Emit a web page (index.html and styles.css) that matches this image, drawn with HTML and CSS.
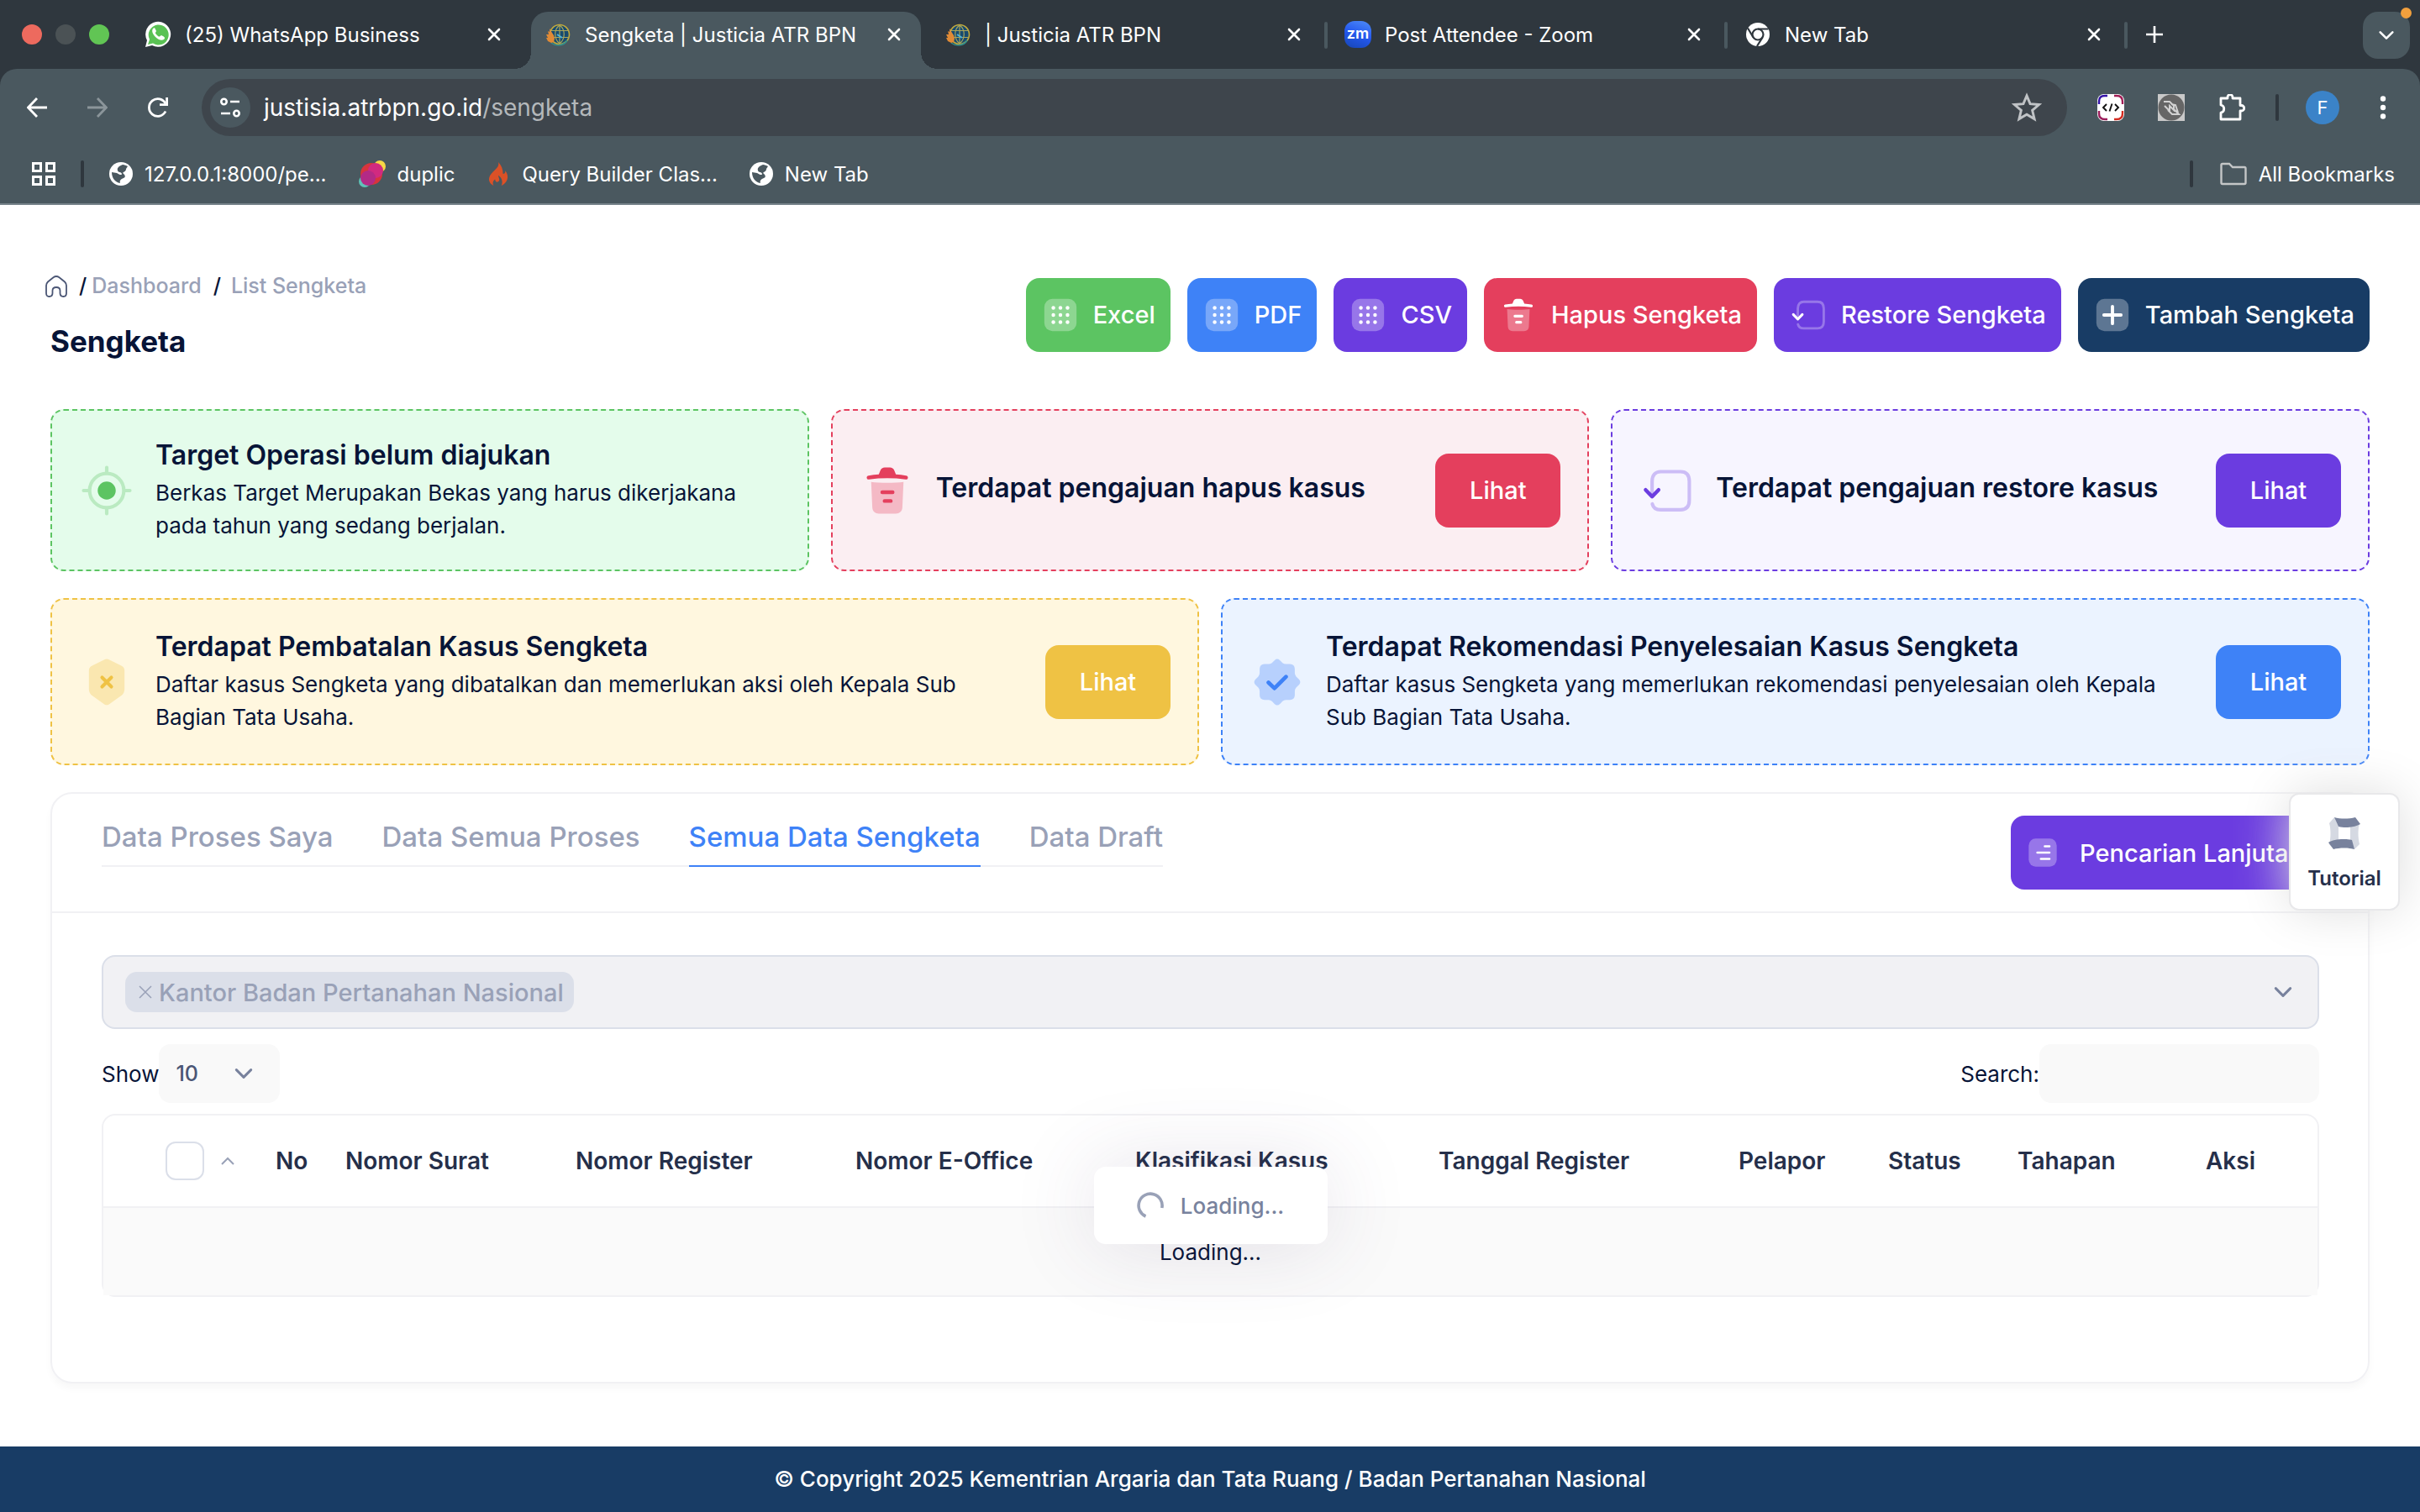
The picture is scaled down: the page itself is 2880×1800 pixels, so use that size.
FILE: index.html
```html
<!DOCTYPE html>
<html lang="id">
<head>
	<meta charset="utf-8">
	<title>Sengketa | Justicia ATR BPN</title>
	<link rel="stylesheet" href="styles.css">
</head>
<body>
	<!-- shared icons -->
	<svg class="sprite" aria-hidden="true">
		<symbol id="i-close" viewBox="0 0 16 16"><path d="M2 2L14 14M14 2L2 14" fill="none" stroke="currentColor" stroke-width="2.6" stroke-linecap="round"/></symbol>
		<symbol id="i-chevron" viewBox="0 0 24 24"><path d="M4 8L12 16L20 8" fill="none" stroke="currentColor" stroke-width="2.8" stroke-linecap="round" stroke-linejoin="round"/></symbol>
		<symbol id="i-grid" viewBox="0 0 24 24">
			<rect x="2" y="2" width="20" height="20" rx="5" fill="currentColor" opacity=".3"/>
			<g fill="currentColor">
				<circle cx="7.6" cy="7.6" r="1.15"/><circle cx="12" cy="7.6" r="1.15"/><circle cx="16.4" cy="7.6" r="1.15"/>
				<circle cx="7.6" cy="12" r="1.15"/><circle cx="12" cy="12" r="1.15"/><circle cx="16.4" cy="12" r="1.15"/>
				<circle cx="7.6" cy="16.4" r="1.15"/><circle cx="12" cy="16.4" r="1.15"/><circle cx="16.4" cy="16.4" r="1.15"/>
			</g>
		</symbol>
		<symbol id="i-trash" viewBox="0 0 24 24">
			<path opacity=".3" fill="currentColor" d="M5 8.3C8.500 8.800 15.500 8.800 19 8.300L18.500 19.300C18.400 21 17.300 22 15.600 22H8.400C6.700 22 5.600 21 5.500 19.300Z"/>
			<path fill="currentColor" d="M8.300 5L9 3.300C9.300 2.500 10 2 10.900 2H13.100C14 2 14.700 2.500 15 3.300L15.700 5C17.200 5.100 18.700 5.300 20.100 5.500C20.700 5.600 21 6 20.900 6.500C20.800 7 20.400 7.300 19.900 7.200C14.700 6.500 9.300 6.500 4.100 7.200C3.600 7.300 3.200 7 3.100 6.500C3 6 3.300 5.600 3.900 5.500C5.300 5.300 6.800 5.100 8.300 5Z"/>
			<path d="M9.800 12.700H14.300M10.800 16.500H13.500" stroke="currentColor" stroke-width="1.600" stroke-linecap="round"/>
		</symbol>
		<symbol id="i-restore" viewBox="0 0 24 24">
			<path opacity=".3" fill="none" stroke="currentColor" stroke-width="1.500" stroke-linecap="round" d="M5.500 14V8C5.500 5.200 7 3.800 9.200 3.800H17.800C20.200 3.800 21.600 5.200 21.600 8V16.200C21.600 18.900 20.200 20.300 17.800 20.300H9.200C7.300 20.300 6 19.500 5.600 17.800"/>
			<path fill="none" stroke="currentColor" stroke-width="1.600" stroke-linecap="round" stroke-linejoin="round" d="M2.700 11.700L5.500 14.600L8.300 11.700"/>
		</symbol>
		<symbol id="i-atr" viewBox="0 0 32 32">
			<circle cx="18" cy="16" r="11.500" fill="#174a70" stroke="#c2a93c" stroke-width="1.600"/>
			<path d="M18 5V27M7 11.500H29M7 19.500H29M18 5C11 10 11 21 18 27M18 5C25 10 25 21 18 27" fill="none" stroke="#a9a55a" stroke-width="1.200"/>
			<path d="M8 26C13 30 23 30 27 23" fill="none" stroke="#2f8e8e" stroke-width="1.600"/>
			<path d="M6 9L9 14L11 17L12 21L11 25L8 26L4 24L2 20L4 20L2 16L5 16L4 12L6 13Z" fill="#e08a36"/>
			<path d="M15 16L21 20" stroke="#4fb3d8" stroke-width="2"/>
		</symbol>
		<symbol id="i-globe" viewBox="0 0 28 28">
			<circle cx="14" cy="14" r="14" fill="#fff"/>
			<path fill="#4a585f" d="M16 3C11 5 9 7 10 10C11 13 14 11 15 14C15 16 12 15 9 13L3 12C3 19 7 24 13 25C12 22 14 20 17 19C20 18 19 15 16 13C18 11 20 11 20 8L22 5C20 4 18 3 16 3Z"/>
		</symbol>
	</svg>

	<!-- browser window -->
	<header class="browser">
		<div class="tab-strip">
			<div class="lights"><span class="light red"></span><span class="light grey"></span><span class="light green"></span></div>
			<div class="tab">
				<svg class="tab-icon" viewBox="0 0 32 32"><path d="M1 31L3 23A15 15 0 1 1 9 29Z" fill="#fff"/><path d="M4 28L6 22A12 12 0 1 1 10 26.500Z" fill="#5ac254"/><path d="M10 9C8 12 10 16 13 19C16 22 20 24 23 22C25 20 24 19 20 17C18 18 18 20 15 17C12 14 13 14 14 12L12 8Z" fill="#fff"/></svg>
				<span class="tab-title">(25) WhatsApp Business</span>
				<button class="tab-close" aria-label="Close tab"><svg><use href="#i-close"/></svg></button>
			</div>
			<div class="tab active">
				<svg class="tab-icon"><use href="#i-atr"/></svg>
				<span class="tab-title">Sengketa | Justicia ATR BPN</span>
				<button class="tab-close" aria-label="Close tab"><svg><use href="#i-close"/></svg></button>
			</div>
			<div class="tab divided">
				<svg class="tab-icon"><use href="#i-atr"/></svg>
				<span class="tab-title">| Justicia ATR BPN</span>
				<button class="tab-close" aria-label="Close tab"><svg><use href="#i-close"/></svg></button>
			</div>
			<div class="tab divided">
				<span class="tab-icon zoom-logo">zm</span>
				<span class="tab-title">Post Attendee - Zoom</span>
				<button class="tab-close" aria-label="Close tab"><svg><use href="#i-close"/></svg></button>
			</div>
			<div class="tab divided">
				<svg class="tab-icon" viewBox="0 0 32 32"><circle cx="16" cy="16" r="14" fill="#fff"/><circle cx="16" cy="16" r="6.500" fill="none" stroke="#2f373e" stroke-width="2.200"/><path d="M16 9.500H28.500M10.400 19.300L4 8.500M21.600 19.300L15 30" stroke="#2f373e" stroke-width="2.200"/></svg>
				<span class="tab-title">New Tab</span>
				<button class="tab-close" aria-label="Close tab"><svg><use href="#i-close"/></svg></button>
			</div>
			<button class="new-tab" aria-label="New tab"><svg viewBox="0 0 20 20"><path d="M10 0V20M0 10H20" stroke="#fff" stroke-width="2.600"/></svg></button>
			<button class="tab-search" aria-label="Search tabs"><svg><use href="#i-chevron"/></svg><span class="alert-dot"></span></button>
		</div>

		<div class="toolbar">
			<button class="nav-btn" aria-label="Back"><svg viewBox="0 0 24 24"><path d="M12 1L1.500 12L12 23M1.500 12H24" fill="none" stroke="#fff" stroke-width="2.800"/></svg></button>
			<button class="nav-btn" aria-label="Forward"><svg viewBox="0 0 24 24"><path d="M12 1L22.500 12L12 23M22.500 12H0" fill="none" stroke="#8b959a" stroke-width="2.800"/></svg></button>
			<button class="nav-btn" aria-label="Reload"><svg viewBox="0 0 24 24"><path d="M21 16.500A10.300 10.300 0 1 1 21 7.500" fill="none" stroke="#fff" stroke-width="2.800"/><path d="M24 0V10H14V7.200H21.200V0Z" fill="#fff"/></svg></button>
			<div class="address">
				<button class="site-info" aria-label="Site information"><svg viewBox="0 0 24 24"><g fill="none" stroke="#fff" stroke-width="2.600"><circle cx="4.500" cy="5" r="3.200"/><path d="M12 5H23M1 19H12"/><circle cx="19.500" cy="19" r="3.200"/></g></svg></button>
				<div class="url" role="textbox" contenteditable="true" spellcheck="false" aria-label="Address">justisia.atrbpn.go.id<span class="path">/sengketa</span></div>
				<svg class="star" viewBox="0 0 32 32"><path d="M16 3.500L19.600 12.100L29 12.900L21.900 19L24.100 28.100L16 23.300L7.900 28.100L10.100 19L3 12.900L12.400 12.100Z" fill="none" stroke="#c0c3c6" stroke-width="2.600"/></svg>
			</div>
			<div class="extensions">
				<svg viewBox="0 0 32 32"><rect width="32" height="32" rx="8" fill="#fff"/><g fill="none" stroke-width="2.400"><path d="M2 12V9Q2 2 9 2H12" stroke="#3412a8"/><path d="M20 2H23Q30 2 30 9V12" stroke="#a11d56"/><path d="M2 20V23Q2 30 9 30H12" stroke="#9b1c5b"/><path d="M20 30H23Q30 30 30 23V20" stroke="#d32b20"/></g><path d="M11 12L7 16L11 20M21 12L25 16L21 20M17.500 11.500L14.500 20.500" fill="none" stroke="#111" stroke-width="1.900"/></svg>
				<svg viewBox="0 0 32 32"><rect width="32" height="32" fill="#c9c9c9"/><circle cx="16" cy="16" r="15.500" fill="#666"/><path d="M7 9H14L19 14V19L14 14V20L8 14M12 19L17 24H25L19 18M16 12L21 13L24 22" fill="none" stroke="#d2d2d2" stroke-width="2"/></svg>
				<svg viewBox="0 0 32 32"><path d="M3 5H11V3.500A3 3 0 0 1 17 3.500V5H26V13.500H27.500A3 3 0 0 1 27.500 20H26V30H3V22C8 21 8 14 3 13Z" fill="none" stroke="#fff" stroke-width="2.800" stroke-linejoin="round"/></svg>
			</div>
			<span class="bar-sep"></span>
			<span class="avatar">F</span>
			<button class="menu-dots" aria-label="Menu"><svg viewBox="0 0 8 28"><g fill="#fff"><circle cx="4" cy="3.500" r="3.200"/><circle cx="4" cy="14" r="3.200"/><circle cx="4" cy="24.500" r="3.200"/></g></svg></button>
		</div>

		<nav class="bookmarks">
			<svg class="bm-apps" viewBox="0 0 28 28"><path d="M1.500 1.500H10.500V10.500H1.500ZM17.500 1.500H26.500V10.500H17.500ZM1.500 17.500H10.500V26.500H1.500ZM17.500 17.500H26.500V26.500H17.500Z" fill="none" stroke="#fff" stroke-width="3"/></svg>
			<span class="bar-sep"></span>
			<a class="bookmark" href="#"><svg class="bm-icon"><use href="#i-globe"/></svg>127.0.0.1:8000/pe...</a>
			<a class="bookmark" href="#"><svg class="bm-icon wide" viewBox="0 0 32 32"><circle cx="25" cy="7" r="7" fill="#f6d745"/><circle cx="7" cy="25" r="7" fill="#5fc2b8"/><circle cx="15" cy="16" r="13" fill="#d8343c"/><circle cx="20" cy="12" r="9" fill="#d12a80"/><circle cx="11" cy="21" r="9" fill="#b32a86"/></svg>duplic</a>
			<a class="bookmark" href="#"><svg class="bm-icon" viewBox="0 0 28 30"><path d="M14 0C16 6 10 9 5 15C0 21 2 27 8 30C6 26 8 23 10 22C10 25 12 26 14 25C17 23 14 20 14 17C19 20 20 26 18 30C25 27 29 19 23 11C23 14 22 15 20 15C20 9 18 4 14 0Z" fill="#db5127"/></svg>Query Builder Clas...</a>
			<a class="bookmark" href="#"><svg class="bm-icon"><use href="#i-globe"/></svg>New Tab</a>
			<span class="bar-sep push"></span>
			<a class="bookmark all" href="#"><svg class="bm-icon wide" viewBox="0 0 32 28"><path d="M1.500 3.500Q1.500 2 3 2H11L15 6H29Q30.500 6 30.500 7.500V24.500Q30.500 26 29 26H3Q1.500 26 1.500 24.500Z" fill="none" stroke="#c4c6c7" stroke-width="2.400"/></svg>All Bookmarks</a>
		</nav>
	</header>

	<main class="content">
		<div class="page-head">
			<div class="page-title">
				<nav class="breadcrumb">
					<a href="#" aria-label="Home"><svg viewBox="0 0 26 26"><path d="M1 12Q1 9.500 3 7.500L9.500 2.200Q13 -.2 16.500 2.200L23 7.500Q25 9.500 25 12V21Q25 25 21.500 25Q17.500 25 17.500 21V18Q17.500 14 13 14Q8.500 14 8.500 18V21Q8.500 25 4.500 25Q1 25 1 21Z" fill="none" stroke="#4b5675" stroke-width="1.800"/></svg></a>
					<span class="slash">/</span><a href="#">Dashboard</a><span class="slash wide">/</span><span>List Sengketa</span>
				</nav>
				<h1>Sengketa</h1>
			</div>
			<div class="actions">
				<button class="btn green"><svg><use href="#i-grid"/></svg>Excel</button>
				<button class="btn blue"><svg><use href="#i-grid"/></svg>PDF</button>
				<button class="btn purple"><svg><use href="#i-grid"/></svg>CSV</button>
				<button class="btn red"><svg><use href="#i-trash"/></svg>Hapus Sengketa</button>
				<button class="btn purple"><svg><use href="#i-restore"/></svg>Restore Sengketa</button>
				<button class="btn navy"><svg viewBox="0 0 24 24"><rect x="2" y="2" width="20" height="20" rx="5" fill="#fff" opacity=".3"/><path d="M12 6.700V17.300M6.700 12H17.300" stroke="#fff" stroke-width="2" stroke-linecap="round"/></svg>Tambah Sengketa</button>
			</div>
		</div>

		<div class="notices three">
			<section class="notice n-green">
				<svg viewBox="0 0 24 24"><g fill="none" stroke="currentColor" opacity=".3" stroke-width="1.500" stroke-linecap="round"><circle cx="12" cy="12" r="7.400"/><path d="M12 2V4M12 20V22M2 12H4M20 12H22"/></g><circle cx="12" cy="12" r="3.900" fill="currentColor"/></svg>
				<div class="notice-text">
					<h4>Target Operasi belum diajukan</h4>
					<p>Berkas Target Merupakan Bekas yang harus dikerjakana pada tahun yang sedang berjalan.</p>
				</div>
			</section>
			<section class="notice n-red">
				<svg><use href="#i-trash"/></svg>
				<div class="notice-text"><h4>Terdapat pengajuan hapus kasus</h4></div>
				<button class="btn view red">Lihat</button>
			</section>
			<section class="notice n-purple">
				<svg><use href="#i-restore"/></svg>
				<div class="notice-text"><h4>Terdapat pengajuan restore kasus</h4></div>
				<button class="btn view purple">Lihat</button>
			</section>
		</div>

		<div class="notices two">
			<section class="notice n-yellow">
				<svg viewBox="0 0 24 24"><path opacity=".3" fill="currentColor" d="M11 2.300Q12 1.700 13 2.300L18.500 5Q19.700 5.700 19.700 7V15Q19.700 16.600 18.600 17.600L13 21.600Q12 22.300 11 21.600L5.400 17.600Q4.300 16.600 4.300 15V7Q4.300 5.700 5.500 5Z"/><path d="M10 10L14 14M14 10L10 14" stroke="currentColor" stroke-width="1.500" stroke-linecap="round"/></svg>
				<div class="notice-text">
					<h4>Terdapat Pembatalan Kasus Sengketa</h4>
					<p>Daftar kasus Sengketa yang dibatalkan dan memerlukan aksi oleh Kepala Sub Bagian Tata Usaha.</p>
				</div>
				<button class="btn view yellow">Lihat</button>
			</section>
			<section class="notice n-blue">
				<svg viewBox="0 0 24 24"><path opacity=".3" fill="currentColor" d="M10.900 2.500Q12 1.500 13.100 2.500L14.300 3.700Q14.900 4.200 15.700 4.200H17.500Q19.500 4.300 19.600 6.300V8.100Q19.600 8.900 20.200 9.600L21.500 10.900Q22.400 12 21.500 13.100L20.200 14.400Q19.600 15.100 19.600 15.900V17.700Q19.500 19.600 17.500 19.700H15.700Q14.900 19.700 14.300 20.300L13.100 21.500Q12 22.500 10.900 21.500L9.700 20.300Q9.100 19.700 8.300 19.700H6.500Q4.500 19.600 4.400 17.700V15.900Q4.400 15.100 3.800 14.400L2.500 13.100Q1.600 12 2.500 10.900L3.800 9.600Q4.400 8.900 4.400 8.100V6.300Q4.500 4.300 6.500 4.200H8.300Q9.100 4.200 9.700 3.700Z"/><path d="M8.200 12.200L10.800 14.700L15.800 9.700" fill="none" stroke="currentColor" stroke-width="1.700" stroke-linecap="round" stroke-linejoin="round"/></svg>
				<div class="notice-text">
					<h4>Terdapat Rekomendasi Penyelesaian Kasus Sengketa</h4>
					<p>Daftar kasus Sengketa yang memerlukan rekomendasi penyelesaian oleh Kepala Sub Bagian Tata Usaha.</p>
				</div>
				<button class="btn view blue">Lihat</button>
			</section>
		</div>

		<section class="card">
			<div class="card-head">
				<div class="data-tabs">
					<a href="#">Data Proses Saya</a>
					<a href="#">Data Semua Proses</a>
					<a href="#" class="on">Semua Data Sengketa</a>
					<a href="#">Data Draft</a>
				</div>
				<button class="btn search-more purple"><svg viewBox="0 0 24 24"><rect x="2" y="2" width="20" height="20" rx="5" fill="#fff" opacity=".3"/><path d="M13.500 7.500H16.800M8.200 12H16.800M10.700 16.500H16.800" stroke="#fff" stroke-width="1.600" stroke-linecap="round"/></svg>Pencarian Lanjutan</button>
			</div>
			<div class="card-body">
				<div class="office">
					<span class="tag"><svg viewBox="0 0 16 16"><path d="M1 1L15 15M15 1L1 15" stroke="currentColor" stroke-width="1.500"/></svg>Kantor Badan Pertanahan Nasional</span>
					<select disabled aria-label="Kantor"><option></option></select>
					<svg class="chev"><use href="#i-chevron"/></svg>
				</div>

				<div class="table-tools">
					<div class="length">
						<label for="length">Show</label>
						<div class="length-box">
							<select id="length"><option>10</option><option>25</option><option>50</option></select>
							<svg class="chev"><use href="#i-chevron"/></svg>
						</div>
					</div>
					<div class="filter">
						<label for="search">Search:</label>
						<input id="search" type="search">
					</div>
				</div>

				<div class="table-wrap">
					<table>
						<colgroup>
							<col class="c-check"><col class="c-no"><col class="c-surat"><col class="c-reg"><col class="c-reg"><col class="c-klas"><col class="c-tgl"><col class="c-pel"><col class="c-stat"><col class="c-tahap"><col class="c-aksi">
						</colgroup>
						<thead>
							<tr>
								<th><div class="check-cell"><input type="checkbox" aria-label="Pilih semua"><svg viewBox="0 0 16 16"><path d="M1 12L8 5L15 12" fill="none" stroke="#99a1b7" stroke-width="2"/></svg></div></th>
								<th>No</th>
								<th>Nomor Surat</th>
								<th>Nomor Register</th>
								<th>Nomor E-Office</th>
								<th>Klasifikasi Kasus</th>
								<th>Tanggal Register</th>
								<th>Pelapor</th>
								<th>Status</th>
								<th>Tahapan</th>
								<th>Aksi</th>
							</tr>
						</thead>
						<tbody>
							<tr><td colspan="11">Loading...</td></tr>
						</tbody>
					</table>
					<div class="processing">
						<svg viewBox="0 0 32 32"><path d="M10.500 29A14 14 0 1 1 29.800 19" fill="none" stroke="#99a1b7" stroke-width="3.600"/></svg>
						Loading...
					</div>
				</div>
			</div>
		</section>
	</main>

	<button class="tutorial">
		<svg viewBox="0 0 38 40"><path d="M7 1L12 12V28L7 39L1 33C3 25 3 15 1 8ZM31 39L26 28V12L37 8C35 15 35 25 37 33Z" fill="#d5d9e2"/><path d="M7 1C14 3 25 3 32 1L38 9C32 13 20 14 12 12ZM31 39C24 37 13 37 6 39L0 31C6 27 18 26 28 28Z" fill="#78829d"/></svg>
		Tutorial
	</button>

	<footer>&copy; Copyright 2025 Kementrian Argaria dan Tata Ruang / Badan Pertanahan Nasional</footer>
</body>
</html>
```
FILE: styles.css
```css
* {
	box-sizing: border-box;
}

body {
	margin: 0;
	min-height: 100vh;
	display: flex;
	flex-direction: column;
	font-family: Inter, "Liberation Sans", sans-serif;
	font-size: 26px;
	line-height: 39px;
	color: #071437;
	background: #fff;
}

button, input, select {
	font: inherit;
	color: inherit;
	border: 0;
	background: none;
	padding: 0;
	margin: 0;
}

a {
	color: inherit;
	text-decoration: none;
}

svg {
	display: block;
	flex: none;
}

.sprite {
	position: absolute;
	width: 0;
	height: 0;
}

/* browser */
.browser {
	color: #fff;
	background: #2f373e;
	border-bottom: 2px solid #76828a;
}

.tab-strip {
	display: flex;
	height: 82px;
}

.lights {
	width: 150px;
	padding-left: 26px;
	display: flex;
	align-items: center;
	gap: 16px;
}

.light {
	width: 24px;
	height: 24px;
	border-radius: 50%;
}

.light.red { background: #ed6a5e; }
.light.grey { background: #4b5255; }
.light.green { background: #61c554; }

.tab {
	position: relative;
	width: 464px;
	margin: 14px 6px 0;
	padding: 0 24px 14px 16px;
	display: flex;
	align-items: center;
	font-size: 24px;
}

.tab.active {
	background: #4a585f;
	border-radius: 20px 20px 0 0;
}

.tab.active::before, .tab.active::after {
	content: "";
	position: absolute;
	bottom: 0;
	width: 20px;
	height: 20px;
}

.tab.active::before {
	right: 100%;
	background: radial-gradient(circle at 0 0, transparent 20px, #4a585f 20px);
}

.tab.active::after {
	left: 100%;
	background: radial-gradient(circle at 100% 0, transparent 20px, #4a585f 20px);
}

.tab.divided::after {
	content: "";
	position: absolute;
	right: -8px;
	top: 12px;
	width: 4px;
	height: 32px;
	border-radius: 2px;
	background: #4a585f;
}

.tab-icon {
	width: 32px;
	height: 32px;
}

.tab-title {
	flex: 1;
	margin-left: 16px;
	white-space: nowrap;
}

.tab-close svg {
	width: 16px;
	height: 16px;
}

.zoom-logo {
	border-radius: 12px;
	background: linear-gradient(20deg, #1746b4, #2458ee 50%, #4f8df7);
	font-size: 18px;
	font-weight: 600;
	line-height: 29px;
	text-align: center;
}

.new-tab {
	margin-left: 24px;
}

.new-tab svg {
	width: 20px;
	height: 20px;
}

.tab-search {
	position: relative;
	width: 56px;
	height: 56px;
	margin: 14px 12px 0 auto;
	border-radius: 18px;
	background: #4a585f;
}

.tab-search svg {
	width: 22px;
	height: 22px;
	margin: auto;
}

.alert-dot {
	position: absolute;
	top: -5px;
	right: -2px;
	width: 13px;
	height: 13px;
	border-radius: 50%;
	background: #f2a03d;
}

.toolbar {
	height: 92px;
	padding: 0 40px 0 32px;
	display: flex;
	align-items: center;
	border-radius: 20px 20px 0 0;
	background: #4a585f;
}

.nav-btn {
	margin-right: 48px;
}

.nav-btn:nth-child(3) {
	margin-right: 40px;
}

.nav-btn svg {
	width: 24px;
	height: 24px;
}

.address {
	flex: 1;
	height: 68px;
	padding: 0 30px 0 10px;
	display: flex;
	align-items: center;
	border-radius: 34px;
	background: #3e454c;
}

.site-info {
	width: 48px;
	height: 48px;
	border-radius: 50%;
	background: #4a585f;
}

.site-info svg {
	width: 24px;
	height: 24px;
	margin: auto;
}

.url {
	flex: 1;
	margin-left: 16px;
	font-size: 28px;
}

.url .path {
	color: #b4b8bb;
}

.star {
	width: 36px;
	height: 36px;
}

.extensions {
	margin-left: 36px;
	display: flex;
	gap: 40px;
}

.extensions svg {
	width: 32px;
	height: 32px;
}

.bar-sep {
	width: 4px;
	height: 32px;
	border-radius: 2px;
	background: #2f373e;
}

.toolbar .bar-sep {
	margin: 0 32px 0 36px;
}

.avatar {
	width: 40px;
	height: 40px;
	border-radius: 50%;
	background: #3b83c8;
	font-size: 22px;
	line-height: 40px;
	text-align: center;
}

.menu-dots {
	margin-left: 48px;
}

.menu-dots svg {
	width: 8px;
	height: 28px;
}

.bookmarks {
	height: 68px;
	padding: 0 30px 2px 38px;
	display: flex;
	align-items: center;
	background: #4a585f;
	font-size: 24px;
}

.bm-apps {
	width: 28px;
	height: 28px;
	margin-right: 30px;
}

.bookmark {
	display: flex;
	align-items: center;
	gap: 14px;
	margin-left: 30px;
}

.bookmark + .bookmark {
	margin-left: 38px;
}

.bm-icon {
	width: 28px;
	height: 28px;
}

.bm-icon.wide {
	width: 32px;
	height: 32px;
}

.bar-sep.push {
	margin-left: auto;
}

.bookmark.all {
	margin-left: 32px;
}

/* page */
.content {
	padding: 77px 60px 74px;
}

.page-head {
	display: flex;
	justify-content: space-between;
	align-items: center;
	margin-bottom: 59px;
}

.breadcrumb {
	display: flex;
	align-items: center;
	margin-left: -6px;
	font-size: 25px;
	font-weight: 500;
	color: #99a1b7;
}

.breadcrumb svg {
	width: 26px;
	height: 26px;
}

.slash {
	margin: 0 6px 0 14px;
	color: #071437;
}

.slash.wide {
	margin-right: 12px;
}

h1 {
	margin: 24px 0 0;
	font-size: 35px;
	line-height: 44px;
	font-weight: 700;
}

.actions {
	display: flex;
	gap: 20px;
}

.btn {
	height: 88px;
	padding: 0 18px;
	display: flex;
	align-items: center;
	justify-content: center;
	gap: 16px;
	border-radius: 16px;
	color: #fff;
	font-size: 29px;
	font-weight: 500;
	white-space: nowrap;
}

.btn svg {
	width: 46px;
	height: 46px;
}

.btn.green { background: #5cc462; }
.btn.blue { background: #3e82f7; }
.btn.purple { background: #6b3ce0; }
.btn.red { background: #e43f5d; }
.btn.yellow { background: #efc244; }
.btn.navy { background: #183c65; }

.btn.view {
	width: 149px;
}

.notices {
	display: grid;
	column-gap: 26px;
}

.notices.three {
	grid-template-columns: repeat(3, 1fr);
}

.notices.two {
	grid-template-columns: repeat(2, 1fr);
	margin: 32px 0;
}

.notice {
	display: flex;
	align-items: center;
	padding: 33px 32px;
	border: 2px dashed currentColor;
	border-radius: 16px;
}

.two .notice {
	padding: 36px 32px;
}

.notice > svg {
	width: 66px;
	height: 66px;
}

.n-green { color: #5cc462; background: #e4fceb; }
.n-red { color: #e43f5d; background: #fbeef2; }
.n-purple { color: #6b3ce0; background: #f7f5ff; }
.n-yellow { color: #efc244; background: #fff7df; }
.n-blue { color: #3e82f7; background: #ebf3ff; }

.notice-text {
	flex: 1;
	margin-left: 25px;
	color: #071437;
}

.notice .view {
	margin-left: 32px;
}

.notice h4 {
	margin: 0 0 6px;
	font-size: 32px;
	line-height: 39px;
	font-weight: 600;
}

.notice p {
	margin: 0;
}

/* data card */
.card {
	min-height: 704px;
	border: 2px solid #f1f1f4;
	border-radius: 26px;
	box-shadow: 0 6px 8px rgba(0, 0, 0, .03);
}

.card-head {
	height: 142px;
	padding: 0 59px;
	display: flex;
	align-items: center;
	justify-content: space-between;
	border-bottom: 2px solid #f1f1f4;
}

.data-tabs {
	display: flex;
	gap: 58px;
	margin-bottom: 22px;
	border-bottom: 2px solid #f1f1f4;
	font-size: 33px;
	font-weight: 500;
	color: #99a1b7;
}

.data-tabs a {
	margin-bottom: -2px;
	padding-bottom: 14px;
	border-bottom: 2px solid transparent;
}

.data-tabs .on {
	color: #3e82f7;
	border-color: #3e82f7;
}

.btn.search-more svg {
	width: 40px;
	height: 40px;
}

.btn.search-more {
	gap: 24px;
}

.card-body {
	padding: 50px 58px 50px 59px;
}

.office {
	height: 88px;
	padding: 0 28px 0 26px;
	display: flex;
	align-items: center;
	border: 2px solid #dbdfe9;
	border-radius: 16px;
	background: #f1f1f4;
}

.tag {
	height: 48px;
	padding: 0 12px 0 16px;
	display: flex;
	align-items: center;
	gap: 8px;
	border-radius: 14px;
	background: #dbdfe9;
	color: #99a1b7;
	font-size: 29px;
	font-weight: 500;
}

.tag svg {
	width: 16px;
	height: 16px;
}

.office select {
	flex: 1;
	appearance: none;
}

.chev {
	width: 26px;
	height: 26px;
	color: #78829d;
}

.table-tools {
	margin: 18px 0 13px;
	display: flex;
	justify-content: space-between;
}

.length, .filter {
	display: flex;
	align-items: center;
}

.length-box {
	display: grid;
	align-items: center;
}

.length-box > * {
	grid-area: 1 / 1;
}

.length-box .chev {
	justify-self: end;
	margin-right: 30px;
	pointer-events: none;
}

.length select {
	width: 144px;
	height: 70px;
	padding-left: 20px;
	appearance: none;
	border-radius: 14px;
	background: #f9f9f9;
	color: #4b5675;
	font-size: 25px;
	font-weight: 500;
}

.filter input {
	width: 333px;
	height: 70px;
	padding: 0 20px;
	border-radius: 14px;
	background: #f9f9f9;
}

.table-wrap {
	position: relative;
	border: 2px solid #f1f1f4;
	border-radius: 16px;
}

table {
	width: 100%;
	table-layout: fixed;
	border-collapse: collapse;
}

.c-check { width: 205px; }
.c-no { width: 83px; }
.c-surat { width: 274px; }
.c-reg { width: 333px; }
.c-klas { width: 361px; }
.c-tgl { width: 357px; }
.c-pel { width: 178px; }
.c-stat { width: 154px; }
.c-tahap { width: 224px; }
.c-aksi { width: 133px; }

th {
	height: 109px;
	padding: 0;
	border-bottom: 2px solid #f1f1f4;
	text-align: left;
	font-size: 28px;
	font-weight: 600;
	color: #252f4a;
	white-space: nowrap;
}

.check-cell {
	display: flex;
	align-items: center;
	gap: 20px;
	padding-left: 74px;
}

.check-cell input {
	appearance: none;
	width: 46px;
	height: 46px;
	border: 2px solid #dbdfe9;
	border-radius: 12px;
}

.check-cell svg {
	width: 16px;
	height: 16px;
}

td {
	height: 105px;
	padding: 0;
	background: #fafafa;
	text-align: center;
}

.processing {
	position: absolute;
	top: 61px;
	left: 50%;
	transform: translateX(-50%);
	width: 278px;
	height: 92px;
	display: flex;
	align-items: center;
	justify-content: center;
	gap: 20px;
	border-radius: 14px;
	background: #fff;
	box-shadow: 0 0 100px rgba(82, 63, 105, .15);
	color: #78829d;
	font-weight: 500;
}

.processing svg {
	width: 32px;
	height: 32px;
}

.tutorial {
	position: absolute;
	top: 944px;
	right: 24px;
	width: 132px;
	height: 140px;
	padding-top: 8px;
	display: flex;
	flex-direction: column;
	align-items: center;
	justify-content: center;
	gap: 16px;
	border: 2px solid #e8e8ea;
	border-radius: 12px;
	background: #fff;
	box-shadow: 0 0 60px #dedede;
	color: #252f4a;
	font-size: 24px;
	line-height: 36px;
	font-weight: 600;
}

.tutorial svg {
	width: 38px;
	height: 40px;
}

footer {
	height: 78px;
	margin-top: auto;
	background: #183c65;
	color: #fff;
	font-weight: 500;
	line-height: 78px;
	text-align: center;
}
```
